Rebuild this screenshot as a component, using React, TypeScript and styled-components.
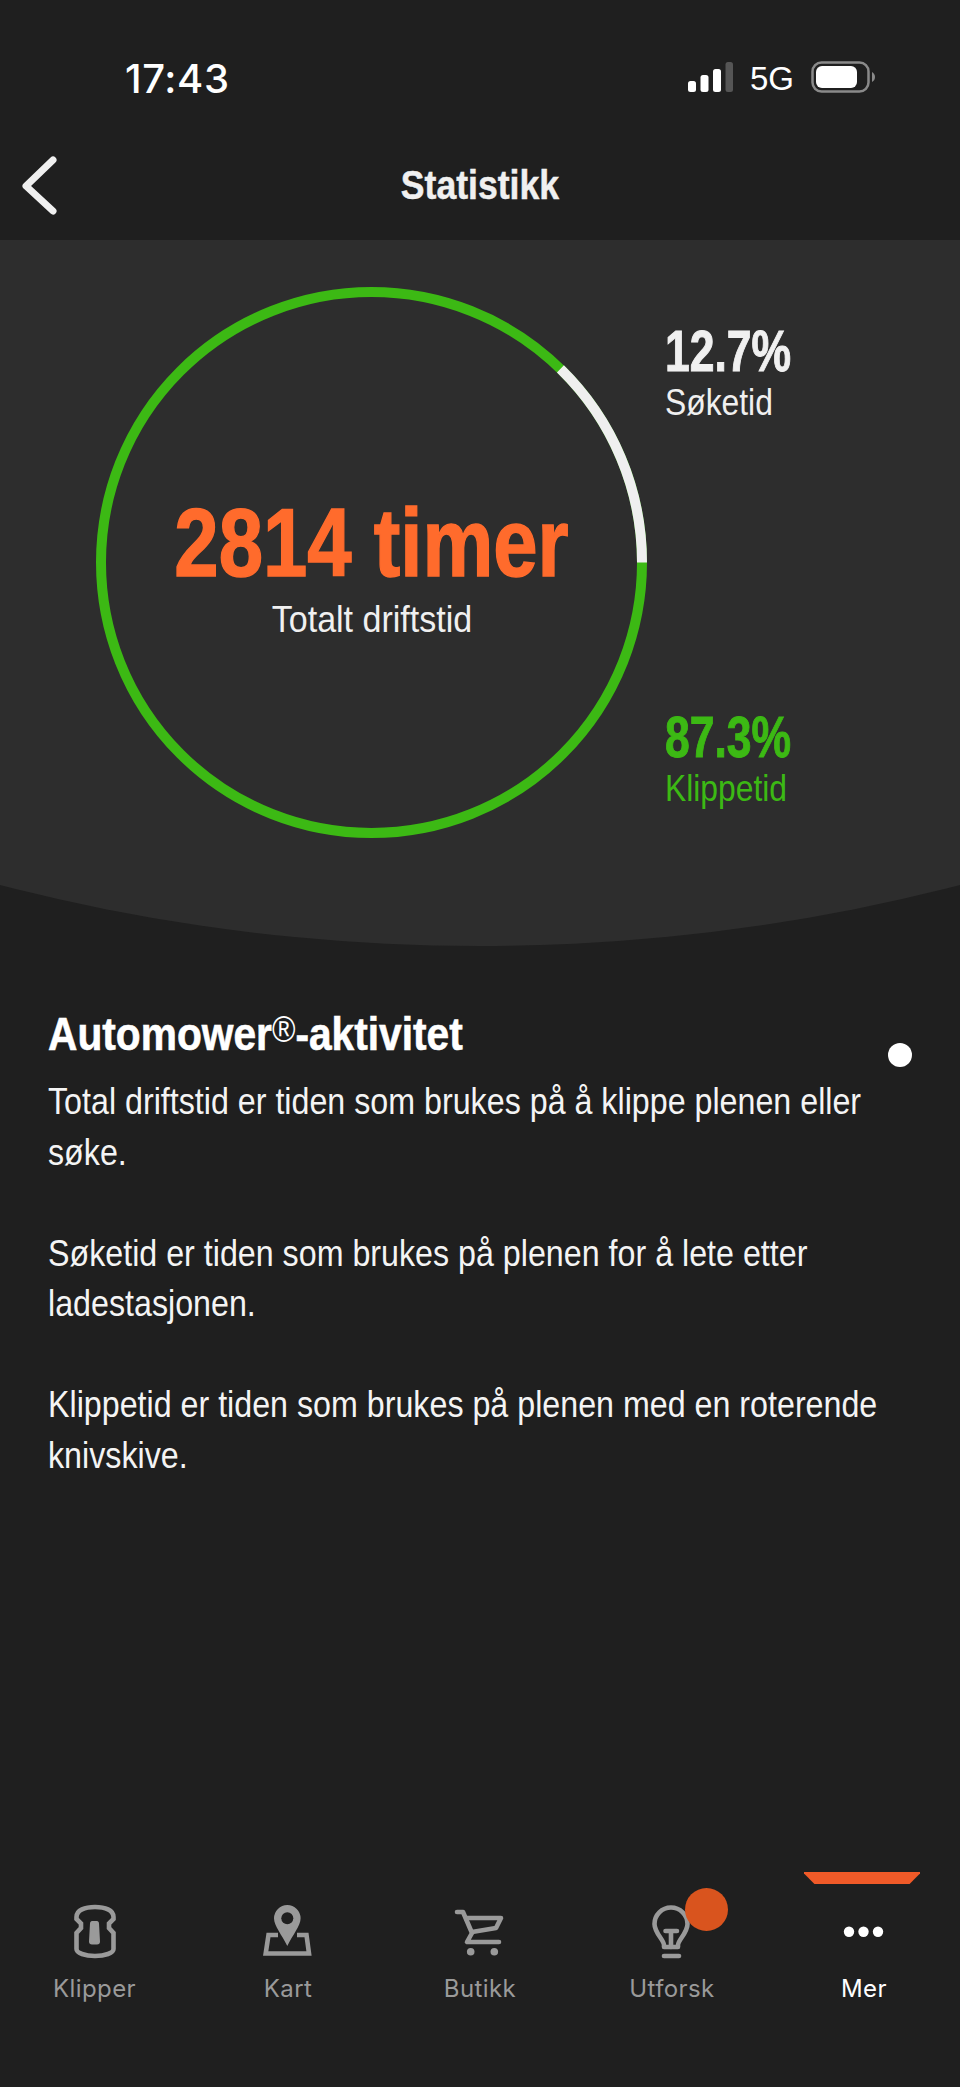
import React from "react";
import styled, { createGlobalStyle } from "styled-components";

const Global = createGlobalStyle`
  html, body { margin: 0; padding: 0; background: #1f1f1f; }
  body { width: 960px; height: 2087px; overflow: hidden; }
`;
const COND = `"Liberation Sans", Arial, sans-serif`;
const UI = `Inter, "Liberation Sans", sans-serif`;

const Page = styled.div`
  width: 960px; height: 2087px; background: #1f1f1f; display: flex; flex-direction: column; color: #fff;
`;
const StatusBar = styled.div`
  height: 140px; box-sizing: border-box; padding: 59px 84px 0 125px; display: flex; justify-content: space-between; align-items: flex-start;
`;
const Time = styled.div`
  font: 500 40px/39px ${UI}; letter-spacing: 0.6px; color: #fff;
`;
const StatusRight = styled.div`
  display: flex; align-items: center; gap: 17px; height: 36px;
`;
const NetLabel = styled.span`font: 400 33px/36px "Liberation Sans", sans-serif; color: #fff; margin-top: 3px;`;
const Header = styled.div`
  height: 100px; display: flex; align-items: center; justify-content: center; position: relative;
`;
const BackButton = styled.svg`position: absolute; left: 22px; top: 16px;`;
const Title = styled.h1`margin: -10px 0 0; font: 700 40px/44px ${COND}; color: #f0f0f0; transform: scaleX(0.89); -webkit-text-stroke: 0.5px #f0f0f0;`;

const Hero = styled.section`
  height: 706px; background: #2d2d2d; clip-path: circle(1919px at 50% -1213px); display: flex; padding: 47px 0 0 96px; box-sizing: border-box;
`;
const Ring = styled.div`
  width: 551px; height: 551px; display: grid; place-items: center; flex: none;
  & > * { grid-area: 1 / 1; }
`;
const RingCenter = styled.div`display: flex; flex-direction: column; align-items: center; margin-top: 12px;`;
const Hours = styled.div`font: 700 96px/96px ${COND}; color: #ff6b2c; white-space: nowrap; transform: scaleX(0.83); -webkit-text-stroke: 1.5px #ff6b2c;`;
const HoursLabel = styled.div`font: 400 37px/44px ${COND}; color: #f0f0f0; margin-top: 7px; transform: scaleX(0.92);`;
const Stats = styled.div`
  flex: none; width: 200px; height: 551px; margin-left: 18px; display: flex; flex-direction: column; justify-content: space-between; padding: 33px 0 28px; box-sizing: border-box;
`;
const Stat = styled.div<{ $c: string }>`color: ${(p) => p.$c}; display: flex; flex-direction: column;`;
const StatValue = styled.div`font: 700 57px/62px ${COND}; transform: scaleX(0.78); transform-origin: left; -webkit-text-stroke: 1px currentColor;`;
const StatLabel = styled.div`font: 400 37px/42px ${COND}; transform: scaleX(0.86); transform-origin: left;`;

const Body = styled.section`
  flex: 1; padding: 59px 48px 0; display: flex; flex-direction: column; position: relative;
`;
const Dot = styled.div`position: absolute; left: 888px; top: 97px; width: 24px; height: 24px; border-radius: 50%; background: #fff;`;
const H2 = styled.h2`margin: 0 0 18px; font: 700 46px/50px ${COND}; color: #fff; transform: scaleX(0.885); transform-origin: left; white-space: nowrap; -webkit-text-stroke: 0.6px #fff;`;
const Reg = styled.span`font-size: 36px; vertical-align: 8px; font-weight: 400; -webkit-text-stroke: 0;`;
const P = styled.p`margin: 0 0 50.5px; font: 400 36px/50.5px ${COND}; color: #f4f4f4; width: 960px; transform: scaleX(0.895); transform-origin: left;`;

const Nav = styled.nav`
  height: 215px; display: grid; grid-template-columns: repeat(5, 192px); position: relative;
`;
const NavItem = styled.div<{ $active?: boolean; $nudge?: boolean }>`
  display: flex; flex-direction: column; align-items: center; position: relative; padding-top: 23px;
  padding-right: ${(p) => (p.$nudge ? "3px" : "0")};
  color: ${(p) => (p.$active ? "#fff" : "#9a9a9a")};
`;
const NavIcon = styled.svg`width: 70px; height: 70px; flex: none; fill: none; stroke: currentColor; stroke-width: 4.6;`;
const NavLabel = styled.span`font: 400 24px/30px ${UI}; margin-top: 9px; letter-spacing: 0.4px;`;
const Badge = styled.span`position: absolute; left: 109px; top: 16px; width: 43px; height: 43px; border-radius: 50%; background: #d9541e;`;
const ActiveBar = styled.span`
  position: absolute; left: 36px; top: 0; width: 116px; height: 12px; background: #f05a28;
  clip-path: polygon(0 0, 100% 0, 100% 12%, 91% 100%, 9% 100%, 0 12%);
`;

const C = 275.5;
const R = 270.5;
const arcPoint = (deg: number) => {
  const a = ((deg - 90) * Math.PI) / 180;
  return [C + R * Math.cos(a), C + R * Math.sin(a)];
};
const [sx, sy] = arcPoint(44.3);
const [ex, ey] = arcPoint(90);

export default function App() {
  return (
    <Page>
      <Global />
      <StatusBar>
        <Time>17:43</Time>
        <StatusRight>
          <svg width="45" height="30" viewBox="0 0 45 30" fill="#fff">
            <rect x="0" y="19" width="8" height="11" rx="2.5" />
            <rect x="12.500" y="13" width="8" height="17" rx="2.5" />
            <rect x="25" y="7" width="8" height="23" rx="2.5" />
            <rect x="37.500" y="0" width="7.500" height="30" rx="2.5" fill="#555" />
          </svg>
          <NetLabel>5G</NetLabel>
          <svg width="65" height="32" viewBox="0 0 65 32">
            <rect x="1.500" y="1.500" width="56" height="29" rx="9" fill="none" stroke="#8a8a8a" strokeWidth="2.5" />
            <rect x="5" y="5" width="41" height="22" rx="6" fill="#fff" />
            <path d="M61 11c2 1 3 3 3 5s-1 4-3 5z" fill="#8a8a8a" />
          </svg>
        </StatusRight>
      </StatusBar>
      <Header>
        <BackButton width="36" height="60" viewBox="0 0 36 60" fill="none" stroke="#f0f0f0" strokeWidth="7" strokeLinecap="round" strokeLinejoin="round">
          <path d="M31 4 L4 30 L31 55" />
        </BackButton>
        <Title>Statistikk</Title>
      </Header>
      <Hero>
        <Ring>
          <svg width="551" height="551" viewBox="0 0 551 551" fill="none">
            <circle cx={C} cy={C} r={R} stroke="#3cb914" strokeWidth="10" />
            <path d={`M${sx} ${sy} A${R} ${R} 0 0 1 ${ex} ${ey}`} stroke="#efefef" strokeWidth="10" />
          </svg>
          <RingCenter>
            <Hours>2814 timer</Hours>
            <HoursLabel>Totalt driftstid</HoursLabel>
          </RingCenter>
        </Ring>
        <Stats>
          <Stat $c="#f0f0f0">
            <StatValue>12.7%</StatValue>
            <StatLabel>Søketid</StatLabel>
          </Stat>
          <Stat $c="#3cb914">
            <StatValue>87.3%</StatValue>
            <StatLabel>Klippetid</StatLabel>
          </Stat>
        </Stats>
      </Hero>
      <Body>
        <Dot />
        <H2>Automower<Reg>®</Reg>-aktivitet</H2>
        <P>Total driftstid er tiden som brukes på å klippe plenen eller søke.</P>
        <P>Søketid er tiden som brukes på plenen for å lete etter ladestasjonen.</P>
        <P>Klippetid er tiden som brukes på plenen med en roterende knivskive.</P>
      </Body>
      <Nav>
        <NavItem $nudge>
          <NavIcon viewBox="-1 0 70 70">
            <path d="M15.500 22C15.500 15 24 12 34 12S52.500 15 52.500 22V24L48 28.500V33L52.500 38V54C52.500 58 44 61 34 61S15.500 58 15.500 54V38L20 33V28.500L15.500 24Z" />
            <path d="M31 26h5c1 0 2 1 2 2.500l1 18c0 2-1 3-3 3h-5c-2 0-3-1-3-3l1-18c0-1.500 1-2.500 2-2.500z" fill="currentColor" stroke="none" />
          </NavIcon>
          <NavLabel>Klipper</NavLabel>
        </NavItem>
        <NavItem>
          <NavIcon viewBox="0 0 70 70">
            <path d="M34.300 10A13.300 13.300 0 0 0 21 23.300C21 31 29 40 34.300 51 39.600 40 47.600 31 47.600 23.300A13.300 13.300 0 0 0 34.300 10Z" fill="currentColor" stroke="none" />
            <circle cx="34.300" cy="23.300" r="6" fill="#1f1f1f" stroke="none" />
            <path d="M25 40H15.500L12.700 58.500H56L53.500 40H44" />
          </NavIcon>
          <NavLabel>Kart</NavLabel>
        </NavItem>
        <NavItem>
          <NavIcon viewBox="0 0 70 70">
            <path d="M12 17H18L27 38L22 47H54" strokeLinecap="round" strokeLinejoin="round" />
            <path d="M19 23H56L51 33L27 37" strokeLinejoin="round" />
            <circle cx="25.700" cy="56.700" r="3.800" fill="currentColor" stroke="none" />
            <circle cx="49.300" cy="56.700" r="3.800" fill="currentColor" stroke="none" />
          </NavIcon>
          <NavLabel>Butikk</NavLabel>
        </NavItem>
        <NavItem>
          <NavIcon viewBox="-3 0 70 70">
            <path d="M24 52V50C24 45 14.500 38 14.500 29A16.500 16.500 0 0 1 47.500 29C47.500 38 38 45 38 50V52Z" strokeLinejoin="round" />
            <path d="M25.500 36H37M31 36V52" strokeLinecap="round" />
            <path d="M24 61H39" strokeLinecap="round" />
          </NavIcon>
          <NavLabel>Utforsk</NavLabel>
          <Badge />
        </NavItem>
        <NavItem $active>
          <ActiveBar />
          <NavIcon viewBox="0 0 70 70">
            <circle cx="20" cy="36.700" r="5.200" fill="currentColor" stroke="none" />
            <circle cx="34.500" cy="36.700" r="5.200" fill="currentColor" stroke="none" />
            <circle cx="49" cy="36.700" r="5.200" fill="currentColor" stroke="none" />
          </NavIcon>
          <NavLabel>Mer</NavLabel>
        </NavItem>
      </Nav>
    </Page>
  );
}
